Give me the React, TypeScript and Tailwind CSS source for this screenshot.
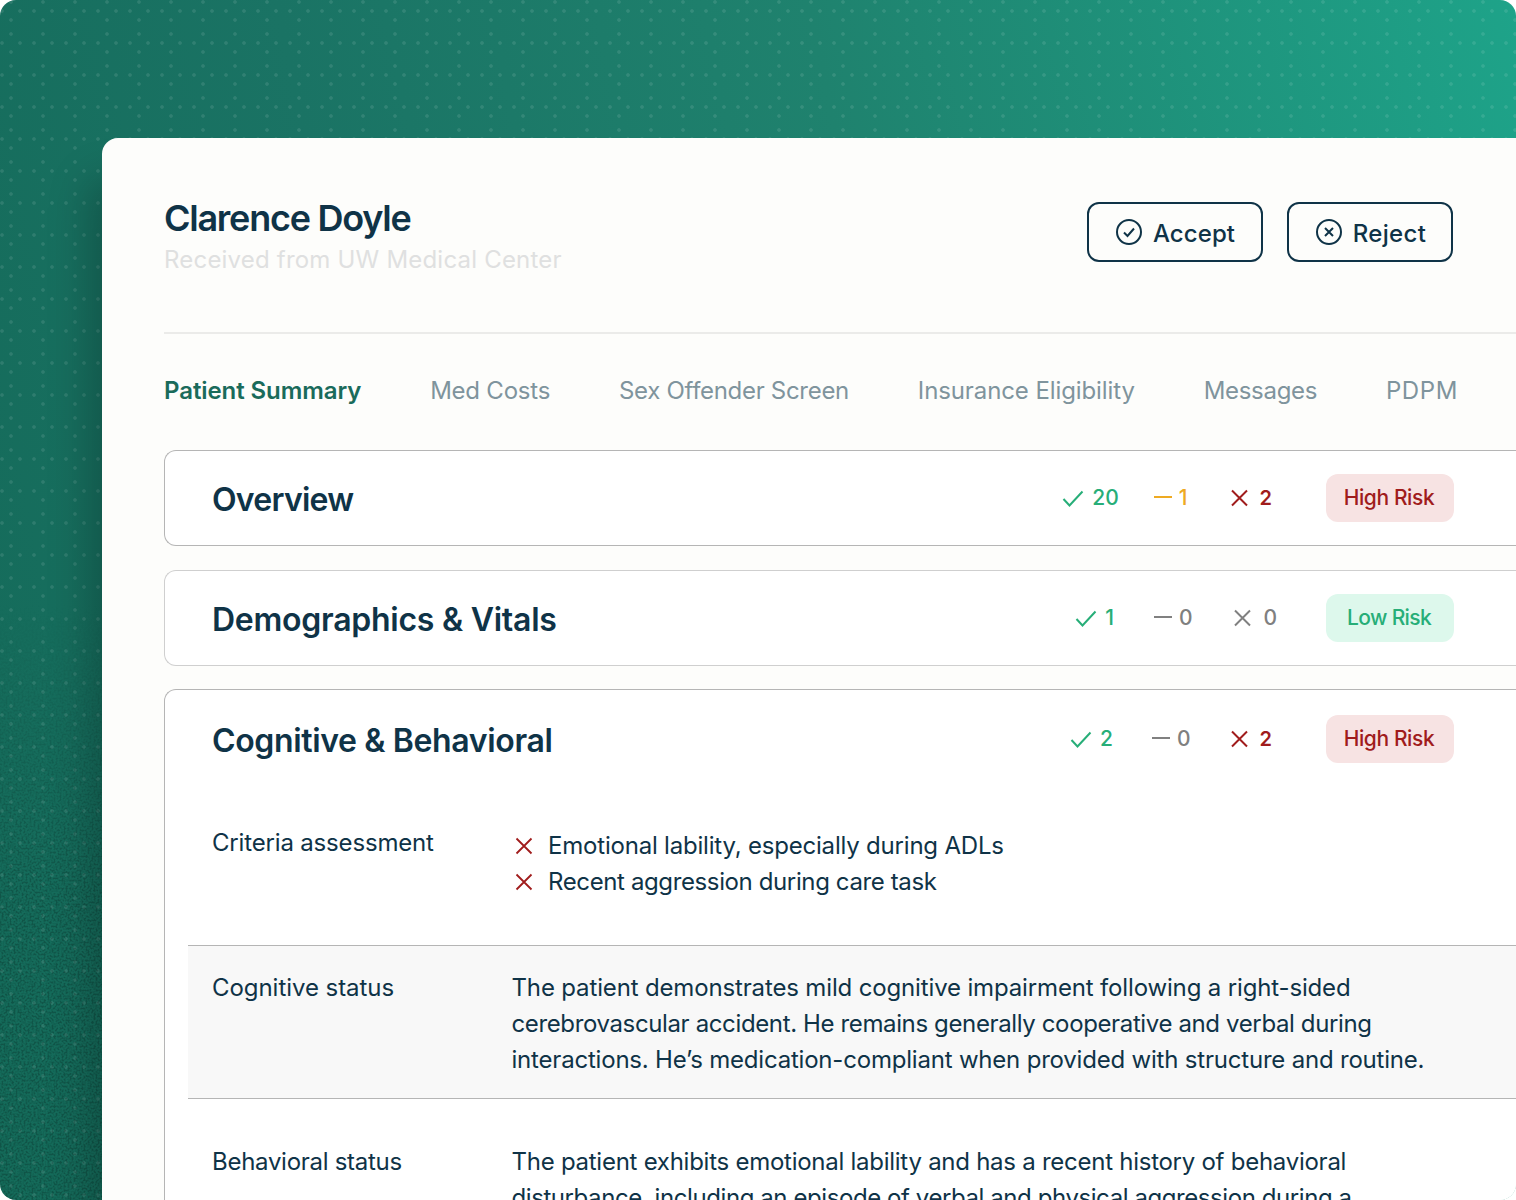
import React from "react";

const GREEN = "#27ae78";
const AMBER = "#eeaa22";
const RED = "#a01c1c";
const GRAY = "#808080";

function Check({ c }: { c: string }) {
  return (
    <svg width="24" height="24" viewBox="0 0 24 24" fill="none" stroke={c} strokeWidth="2" className="shrink-0">
      <path d="M3.5 13 L9.5 19.5 L22.5 5.5" />
    </svg>
  );
}
function Dash({ c }: { c: string }) {
  return (
    <svg width="24" height="24" viewBox="0 0 24 24" fill="none" stroke={c} strokeWidth="2" className="shrink-0">
      <path d="M3 11 H21" />
    </svg>
  );
}
function Cross({ c }: { c: string }) {
  return (
    <svg width="24" height="24" viewBox="0 0 24 24" fill="none" stroke={c} strokeWidth="2" className="shrink-0">
      <path d="M4 4.5 L19 19.5 M19 4.5 L4 19.5" />
    </svg>
  );
}

function Stat({ icon, value, color, gap, bold }: { icon: React.ReactNode; value: string; color: string; gap: string; bold?: boolean }) {
  return (
    <div className={`flex items-center ${gap}`}>
      {icon}
      <span className={`leading-[24px] ${bold ? "text-[20px] font-semibold" : "text-[21px] font-medium"}`} style={{ color }}>
        {value}
      </span>
    </div>
  );
}

function Badge({ high, ml }: { high: boolean; ml: string }) {
  return (
    <div
      className={`flex h-[48px] w-[128px] shrink-0 items-center justify-center rounded-[12px] text-[21px] font-medium ${ml} ${
        high ? "bg-[#f7e3e3] pr-[2px] tracking-[-0.4px] text-[#a01c1c]" : "bg-[#ddf8ec] pr-[2px] tracking-[-0.65px] text-[#27ae78]"
      }`}
    >
      {high ? "High Risk" : "Low Risk"}
    </div>
  );
}

function Header({
  title,
  track,
  a,
  b,
  c,
  bColor,
  cColor,
  high,
  pad,
  g1,
  g2,
  ml,
}: {
  title: string;
  track: string;
  a: string;
  b: string;
  c: string;
  bColor: string;
  cColor: string;
  high: boolean;
  pad: string;
  g1: string;
  g2: string;
  ml: string;
}) {
  return (
    <div className={`flex items-center justify-between pl-[47px] pr-[110px] ${pad}`}>
      <h2 className={`pt-[4px] text-[32px] leading-[44px] font-semibold text-[#0f3347] ${track}`}>{title}</h2>
      <div className="flex items-center gap-[36px]">
        <div className={`flex items-center ${g1}`}>
          <Stat icon={<Check c={GREEN} />} value={a} color={GREEN} gap="gap-[8px]" />
          <div className={`flex items-center ${g2}`}>
            <Stat icon={<Dash c={bColor} />} value={b} color={bColor} gap="gap-[4px]" />
            <Stat icon={<Cross c={cColor} />} value={c} color={cColor} gap="gap-[8px]" bold={cColor === RED} />
          </div>
        </div>
        <Badge high={high} ml={ml} />
      </div>
    </div>
  );
}

function CircleCheck() {
  return (
    <svg width="28" height="28" viewBox="0 0 28 28" fill="none" stroke="#0f3347" strokeWidth="2" className="shrink-0">
      <circle cx="14" cy="14" r="12" />
      <path d="M9 14.5 L12.5 18 L19 10.5" />
    </svg>
  );
}
function CircleX() {
  return (
    <svg width="28" height="28" viewBox="0 0 28 28" fill="none" stroke="#0f3347" strokeWidth="2" className="shrink-0">
      <circle cx="14" cy="14" r="12" />
      <path d="M10 10 L18 18 M18 10 L10 18" />
    </svg>
  );
}

function Btn({ icon, label, cls }: { icon: React.ReactNode; label: string; cls: string }) {
  return (
    <button className={`flex h-[60px] items-center justify-center gap-[10px] rounded-[12px] border-2 border-[#0f3347] bg-transparent text-[24px] font-medium text-[#0f3347] ${cls}`}>
      {icon}
      <span className="pt-[3px]">{label}</span>
    </button>
  );
}

function SmallX() {
  return (
    <svg width="18" height="18" viewBox="0 0 18 18" fill="none" stroke={RED} strokeWidth="1.8" className="shrink-0">
      <path d="M1.5 1.5 L16.5 16.5 M16.5 1.5 L1.5 16.5" />
    </svg>
  );
}

export default function App() {
  return (
    <div className="h-[1200px] w-[1516px] overflow-hidden bg-white font-['Inter',sans-serif] text-[#0f3347]">
      <div className="relative h-[1200px] overflow-hidden rounded-[16px] bg-[linear-gradient(78deg,#146a59_0%,#1a7364_30%,#1f826e_60%,#1ea389_100%)] pl-[102px] pt-[138px]">
        <div className="absolute inset-0 bg-[radial-gradient(circle_at_2px_11px,rgba(255,255,255,0.1)_1.4px,transparent_2.2px),radial-gradient(circle_at_20px_11px,rgba(255,255,255,0.1)_1.4px,transparent_2.2px),radial-gradient(circle_at_11px_2px,rgba(255,255,255,0.1)_1.4px,transparent_2.2px),radial-gradient(circle_at_11px_20px,rgba(255,255,255,0.1)_1.4px,transparent_2.2px)] bg-[length:32px_32px]" />
        <svg className="absolute inset-0 h-full w-full opacity-20 [mask-image:linear-gradient(to_bottom,transparent_50%,black_75%)]" aria-hidden="true">
          <filter id="grain">
            <feTurbulence type="fractalNoise" baseFrequency="0.5" numOctaves="3" seed="4" />
            <feColorMatrix values="0 0 0 0 0 0 0 0 0 0 0 0 0 0 0 0 0 0 -4 2.3" />
          </filter>
          <rect width="100%" height="100%" filter="url(#grain)" />
        </svg>
        <div className="relative h-[1062px] w-[1414px] rounded-tl-[16px] bg-[#fdfdfb] pl-[62px] shadow-[-14px_40px_40px_rgba(0,0,0,0.22)]">
          <header className="flex h-[196px] justify-between border-b-2 border-[#ebebe9] pr-[63px] pt-[64px]">
            <div className="-mt-[6px]">
              <h1 className="text-[36px] leading-[44px] font-semibold tracking-[-1.25px] text-[#0f3347]">Clarence Doyle</h1>
              <p className="mt-[2px] text-[24px] leading-[36px] tracking-[0.2px] text-[#dfe0e0]">Received from UW Medical Center</p>
            </div>
            <div className="flex gap-[24px]">
              <Btn icon={<CircleCheck />} label="Accept" cls="w-[176px] tracking-[0.1px]" />
              <Btn icon={<CircleX />} label="Reject" cls="w-[166px] pl-[1px] tracking-[0.3px]" />
            </div>
          </header>

          <nav className="flex h-[116px] items-center gap-[68.8px] pb-[2px] text-[24px] whitespace-nowrap text-[#7f949d]">
            <span className="font-semibold tracking-[-0.08px] text-[#1a6b5b]">Patient Summary</span>
            <span className="tracking-[-0.22px]">Med Costs</span>
            <span className="tracking-[-0.3px]">Sex Offender Screen</span>
            <span className="tracking-[-0.1px]">Insurance Eligibility</span>
            <span className="tracking-[-0.3px]">Messages</span>
            <span className="tracking-[0.6px]">PDPM</span>
          </nav>

          <div className="flex w-[1400px] flex-col gap-[24px]">
            <section className="rounded-l-[12px] border border-r-0 border-[#b5b5b5] bg-white">
              <Header title="Overview" track="tracking-[-0.75px]" a="20" b="1" c="2" bColor={AMBER} cColor={RED} high pad="py-[23px]" g1="gap-[32px]" g2="gap-[40px]" ml="ml-[18px]" />
            </section>
            <section className="rounded-l-[12px] border border-r-0 border-[#cfcfcf] bg-white">
              <Header title="Demographics & Vitals" track="tracking-[-0.26px]" a="1" b="0" c="0" bColor={GRAY} cColor={GRAY} high={false} pad="py-[23px]" g1="gap-[37px]" g2="gap-[39px]" ml="ml-[13px]" />
            </section>
            <section className="-mt-[1px] h-[600px] rounded-l-[12px] border border-r-0 border-[#b5b5b5] bg-white">
              <Header title="Cognitive & Behavioral" track="tracking-[-0.36px]" a="2" b="0" c="2" bColor={GRAY} cColor={RED} high pad="pt-[25px]" g1="gap-[36px]" g2="gap-[37px]" ml="ml-[18px]" />

              <div className="ml-[23px] mt-[65px] text-[24px] leading-[36px] tracking-[-0.17px]">
                <div className="flex pb-[45px] pl-[24px]">
                  <div className="-mt-[3px] w-[300px] shrink-0">Criteria assessment</div>
                  <ul className="flex flex-col">
                    <li className="flex items-center gap-[15px] pl-[3px] tracking-[-0.2px]"><SmallX />Emotional lability, especially during ADLs</li>
                    <li className="flex items-center gap-[15px] pl-[3px] tracking-[-0.38px]"><SmallX />Recent aggression during care task</li>
                  </ul>
                </div>
                <div className="flex border-y border-[#b5b5b5] bg-[#f8f8f8] pb-[20px] pl-[24px] pt-[24px]">
                  <div className="w-[300px] shrink-0 tracking-[-0.05px]">Cognitive status</div>
                  <p className="-ml-[0.5px] whitespace-nowrap">
                    <span className="block tracking-[-0.15px]">The patient demonstrates mild cognitive impairment following a right-sided</span>
                    <span className="block tracking-[-0.37px]">cerebrovascular accident. He remains generally cooperative and verbal during</span>
                    <span className="block tracking-[-0.2px]">interactions. He’s medication-compliant when provided with structure and routine.</span>
                  </p>
                </div>
                <div className="flex pl-[24px] pt-[45px]">
                  <div className="w-[300px] shrink-0 tracking-[-0.28px]">Behavioral status</div>
                  <p className="-ml-[0.5px] whitespace-nowrap">
                    <span className="block tracking-[-0.26px]">The patient exhibits emotional lability and has a recent history of behavioral</span>
                    <span className="block tracking-[-0.42px]">disturbance, including an episode of verbal and physical aggression during a</span>
                  </p>
                </div>
              </div>
            </section>
          </div>
        </div>
      </div>
    </div>
  );
}
